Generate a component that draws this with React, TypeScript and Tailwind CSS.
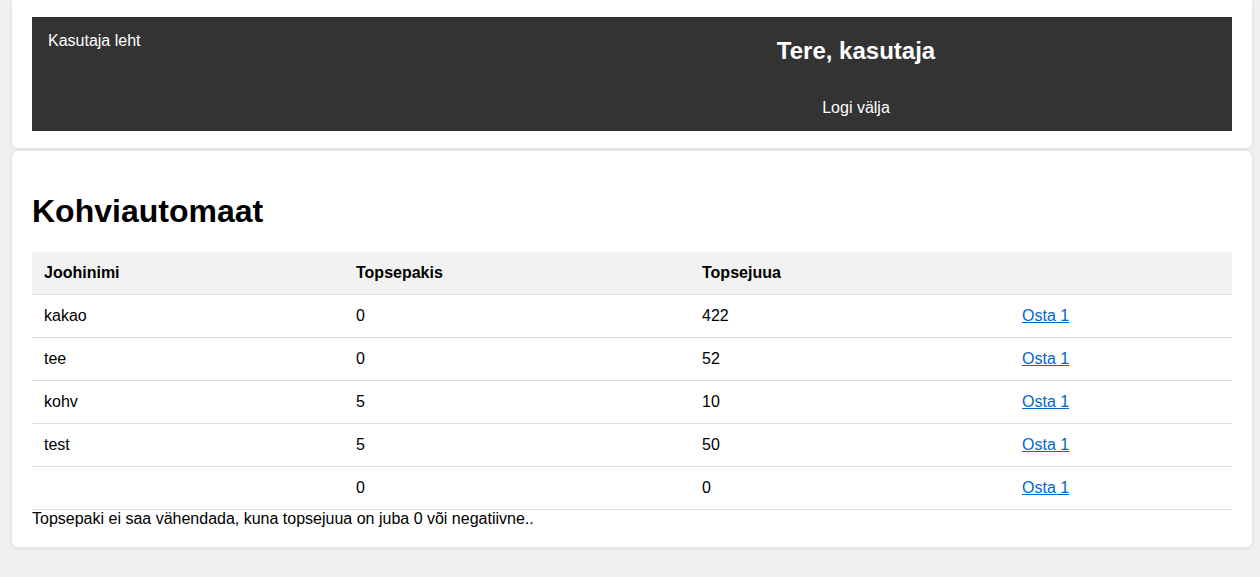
import React from "react";

interface Drink {
    name: string;
    packs: number;
    cups: number;
}

const drinks: Drink[] = [
    { name: "kakao", packs: 0, cups: 422 },
    { name: "tee", packs: 0, cups: 52 },
    { name: "kohv", packs: 5, cups: 10 },
    { name: "test", packs: 5, cups: 50 },
    { name: "", packs: 0, cups: 0 },
];

const Header: React.FC = () => (
    <div className="ml-3 mr-2 rounded-b-md bg-white px-5 pt-[17px] pb-[17px] shadow-[0_1px_4px_rgba(0,0,0,0.08)]">
        <header className="flex bg-[#333333] pt-[15px] pb-[14px] pl-4 pr-4 text-white">
            <div className="flex-1 text-base leading-[18px]">Kasutaja leht</div>
            <div className="w-[720px] text-center">
                <h2 className="mt-[5px] text-2xl font-bold leading-[28px]">Tere, kasutaja</h2>
                <a href="#" className="mt-[34px] block text-base leading-[18px] text-white">
                    Logi välja
                </a>
            </div>
        </header>
    </div>
);

export default function App() {
    return (
        <div className="min-h-[577px] bg-[#efefef] font-['Liberation_Sans',Arial,sans-serif] text-black">
            <Header />

            <main className="ml-3 mr-2 mt-[3px] rounded-md bg-white px-5 pt-5 pb-[19px] shadow-[0_1px_4px_rgba(0,0,0,0.08)]">
                <h1 className="mt-[22px] mb-[22px] text-[32px] font-bold leading-[37px]">Kohviautomaat</h1>

                <table className="w-full border-collapse text-base">
                    <thead>
                        <tr className="border-b border-[#dddddd] bg-[#f2f2f2]">
                            <th className="w-[312px] px-3 py-3 text-left font-bold leading-[18px]">Joohinimi</th>
                            <th className="w-[346px] px-3 py-3 text-left font-bold leading-[18px]">Topsepakis</th>
                            <th className="w-[320px] px-3 py-3 text-left font-bold leading-[18px]">Topsejuua</th>
                            <th className="px-3 py-3"></th>
                        </tr>
                    </thead>
                    <tbody>
                        {drinks.map((d, i) => (
                            <tr key={i} className="border-b border-[#dddddd]">
                                <td className="px-3 py-3 leading-[18px]">{d.name}</td>
                                <td className="px-3 py-3 leading-[18px]">{d.packs}</td>
                                <td className="px-3 py-3 leading-[18px]">{d.cups}</td>
                                <td className="px-3 py-3 leading-[18px]">
                                    <a href="#" className="text-[#0066cc] underline">
                                        Osta 1
                                    </a>
                                </td>
                            </tr>
                        ))}
                    </tbody>
                </table>

                <p className="leading-[18px]">Topsepaki ei saa vähendada, kuna topsejuua on juba 0 või negatiivne..</p>
            </main>
        </div>
    );
}
